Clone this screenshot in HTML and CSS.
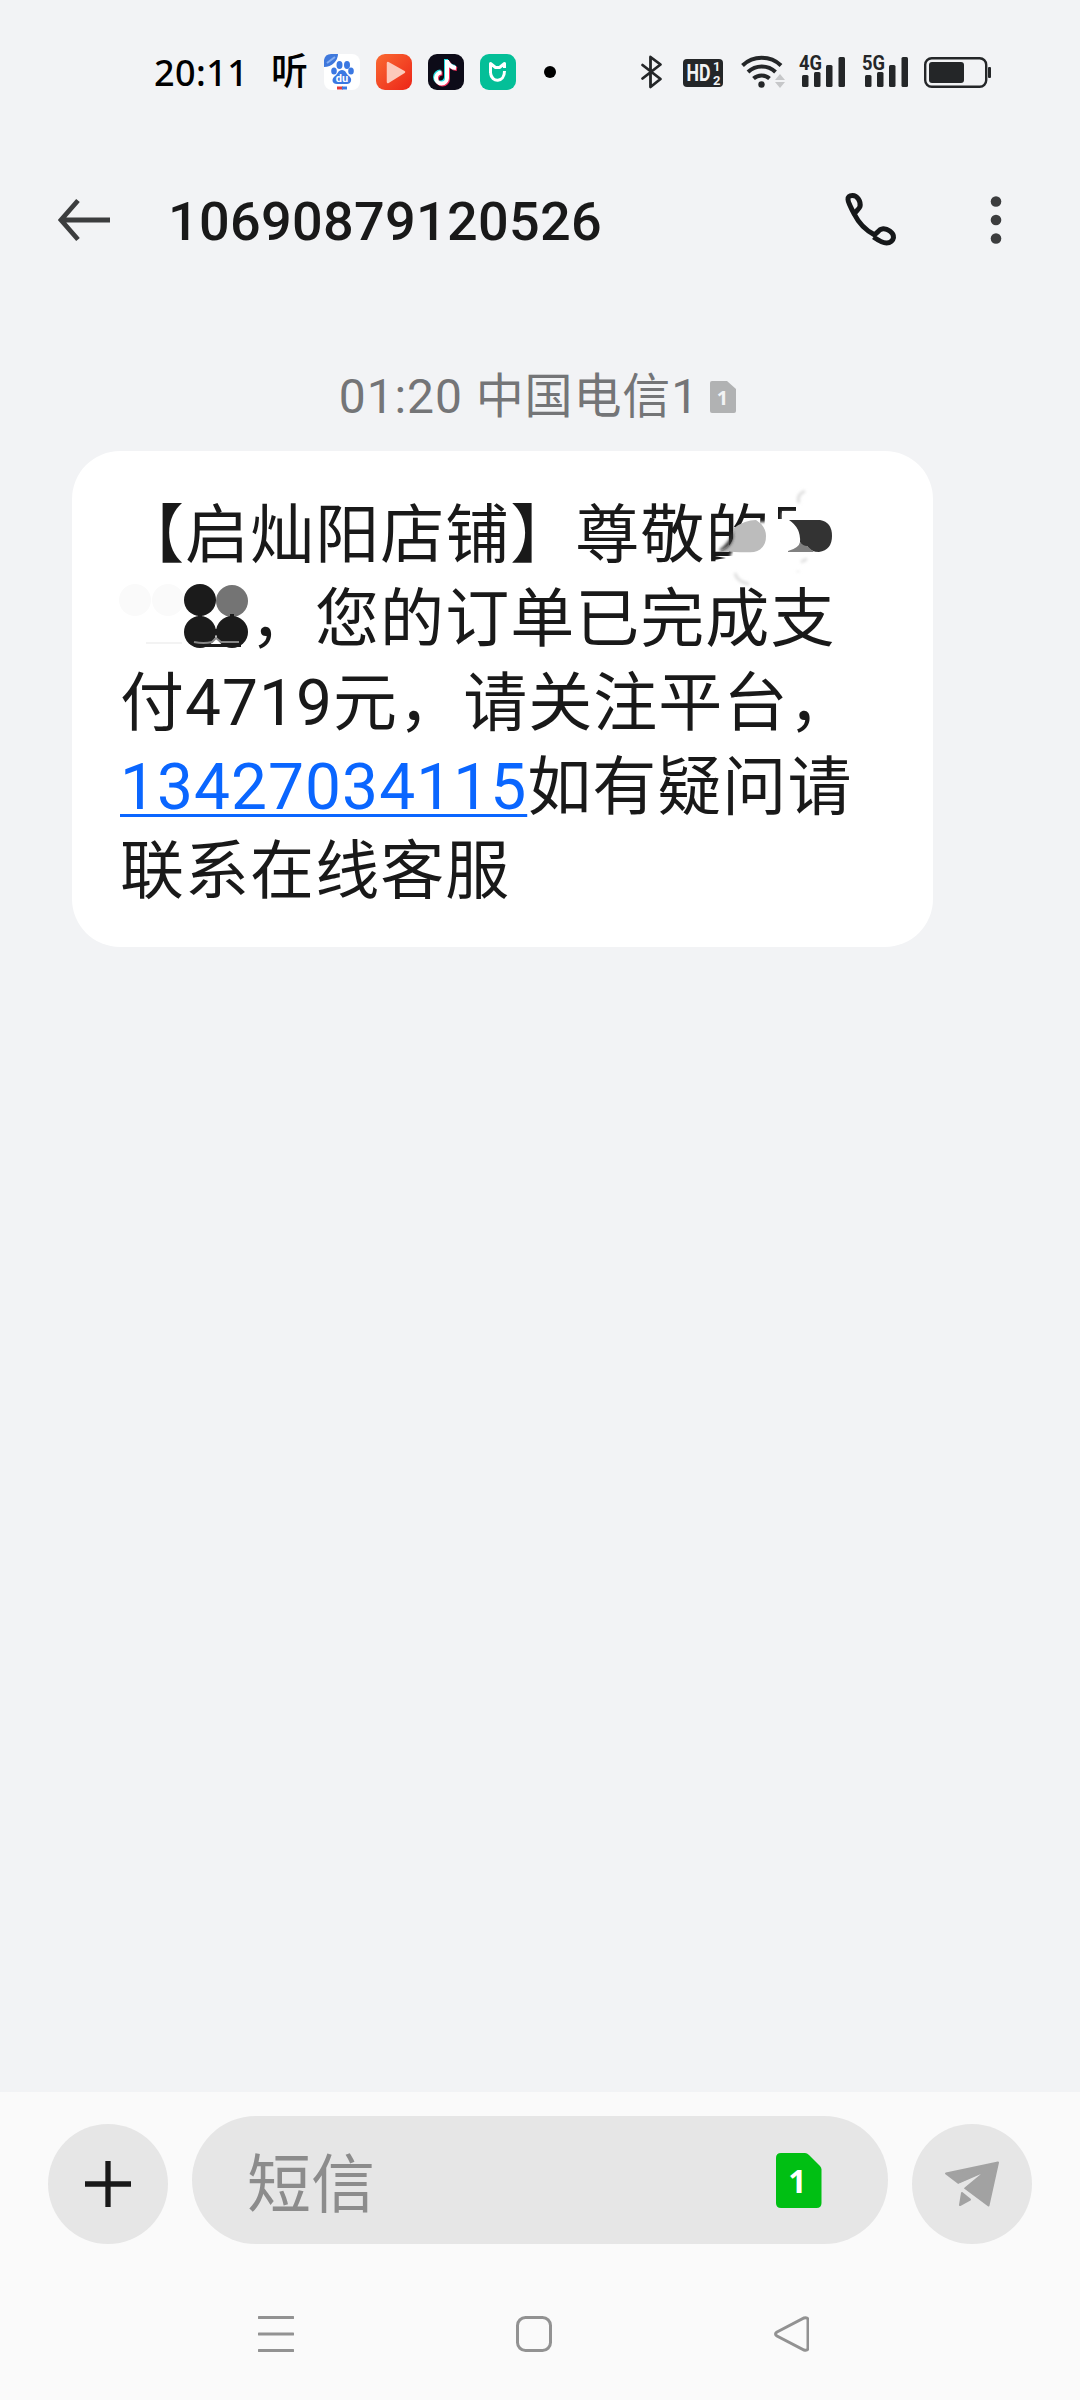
FILE: index.html
```html
<!DOCTYPE html>
<html lang="zh-CN">
<head>
	<meta charset="UTF-8">
	<title>短信</title>
	<link rel="stylesheet" href="styles.css">
</head>
<body>
	<div class="status">
		<span class="time">20:11</span>
		<span class="ting">听</span>
		<div class="apps">
			<svg width="36" height="36" viewBox="0 0 36 36">
				<rect width="36" height="36" rx="8" fill="#fff"/>
				<path d="M0 13V6Q1 0 7 0h7Q14 5 10 9T0 13z" fill="#3f78dc"/>
				<path d="M3 9l8-6" stroke="#86adf0" stroke-width="2"/>
				<g fill="#3b78e2">
					<ellipse cx="15.500" cy="11" rx="3" ry="4"/>
					<ellipse cx="23" cy="11" rx="3" ry="4"/>
					<ellipse cx="10" cy="17" rx="2.800" ry="3.600"/>
					<ellipse cx="27" cy="17" rx="2.800" ry="3.600"/>
					<path d="M18 16c4 0 4 4 7 6 4 3 2 8-2 8H13c-5 0-6-5-2-8 3-2 3-6 7-6z"/>
				</g>
				<text x="18" y="28" class="du">du</text>
				<path d="M13 34h6" stroke="#e53838" stroke-width="3"/>
				<path d="M18 34h5" stroke="#3b78e2" stroke-width="3"/>
			</svg>
			<svg width="36" height="36" viewBox="0 0 36 36">
				<defs>
					<linearGradient id="red" x1="0" y1="0" x2="1" y2="1">
						<stop offset="0" stop-color="#fa6a32"/>
						<stop offset="1" stop-color="#ec2418"/>
					</linearGradient>
				</defs>
				<rect width="36" height="36" rx="9" fill="url(#red)"/>
				<path d="M12 9l16 9-16 10z" fill="#fcc9bb" stroke="#fcc9bb" stroke-width="2.500" stroke-linejoin="round"/>
			</svg>
			<svg width="36" height="36" viewBox="0 0 36 36">
				<rect width="36" height="36" rx="9" fill="#0d0b18"/>
				<g fill="none" stroke-width="4">
					<path d="M18 5v18a5.500 5.500 0 1 1-5.500-5.500M18 6q2 6 9 7" stroke="#25dfe3"/>
					<path d="M20 7v18a5.500 5.500 0 1 1-5.500-5.500M20 8q2 6 9 7" stroke="#f4305c"/>
					<path d="M19 6v18a5.500 5.500 0 1 1-5.500-5.500M19 7q2 6 9 7" stroke="#fff"/>
				</g>
			</svg>
			<svg width="36" height="36" viewBox="0 0 36 36">
				<rect width="36" height="36" rx="9" fill="#04bf98"/>
				<path d="M10.500 19V9.500l5 4h4l5-4V14M10.500 19c1 10 14 10 14-2" fill="none" stroke="#fff" stroke-width="3" stroke-linejoin="round"/>
			</svg>
		</div>
		<i class="more-dot"></i>

		<div class="signals">
			<svg width="364" height="40" viewBox="636 52 364 40">
				<g fill="none" stroke="#242628" stroke-width="2.800" stroke-linejoin="round" stroke-linecap="round">
					<path d="M642.500 65l18 14-10 8V57l10 7.500-18 14"/>
				</g>
				<rect x="683" y="59" width="40" height="28" rx="4" fill="#242628"/>
				<text x="686.500" y="81" class="hd" textLength="24" lengthAdjust="spacingAndGlyphs">HD</text>
				<text x="713" y="71" class="hd-small">1</text>
				<text x="713" y="84.500" class="hd-small">2</text>
				<g fill="none" stroke="#242628" stroke-width="4">
					<path d="M742.500 65.500a28 28 0 0 1 38.500 0"/>
					<path d="M748 72a20 20 0 0 1 27.500 0"/>
					<path d="M753.500 78.500a12 12 0 0 1 16 0"/>
				</g>
				<circle cx="761.500" cy="84.500" r="3.200" fill="#242628"/>
				<path d="M780 74l5 6h-10zM780 88l5-6h-10z" fill="#c6c7c9"/>
				<text x="799" y="70" class="net" textLength="23" lengthAdjust="spacingAndGlyphs">4G</text>
				<text x="862" y="70" class="net" textLength="23" lengthAdjust="spacingAndGlyphs">5G</text>
				<g fill="#242628">
					<rect x="802" y="75" width="6.500" height="12" rx="1.500"/>
					<rect x="814" y="72" width="6.500" height="15" rx="1.500"/>
					<rect x="826" y="65" width="6.500" height="22" rx="1.500"/>
					<rect x="838.500" y="57" width="6.500" height="30" rx="1.500"/>
					<rect x="865" y="75" width="6.500" height="12" rx="1.500"/>
					<rect x="877" y="72" width="6.500" height="15" rx="1.500"/>
					<rect x="889" y="65" width="6.500" height="22" rx="1.500"/>
					<rect x="901.500" y="57" width="6.500" height="30" rx="1.500"/>
					<rect x="929" y="62" width="35" height="21" rx="3"/>
					<rect x="988" y="67" width="3" height="11" rx="1"/>
				</g>
				<rect x="925.200" y="58.200" width="61" height="28.600" rx="6.500" fill="none" stroke="#242628" stroke-width="2.400"/>
			</svg>
		</div>
	</div>

	<div class="header">
		<svg width="54" height="44" viewBox="0 0 54 44">
			<path d="M53 22H4M21 2.500L4 22l17 19.500" fill="none" stroke="#3c3d3e" stroke-width="4.800"/>
		</svg>
		<h1 class="number">10690879120526</h1>
		<svg class="phone" width="54" height="54" viewBox="0 0 54 54">
			<path d="M10.500 21.500C7 15 4 9 4 6.500 4 2.500 6.500 2.500 8.500 2.500c5 0 8.500 6 7.500 11-1 3-5 5-5.500 8 4 8 11 15.500 19.500 20 3-.5 4.500-5 8-5.500 5-1 12 3.500 11.500 8.500-.5 3-3 5.500-7 5.500-3.500 0-8-2.500-13-6" fill="none" stroke="#16181a" stroke-width="5" stroke-linejoin="round"/>
		</svg>
		<svg width="12" height="50" viewBox="0 0 12 50" fill="#3c3d3e">
			<circle cx="6" cy="6.500" r="5.300"/>
			<circle cx="6" cy="25" r="5.300"/>
			<circle cx="6" cy="43.500" r="5.300"/>
		</svg>
	</div>

	<div class="chat">
		<div class="date">
			<span>01:20 中国电信1</span>
			<svg width="26" height="32" viewBox="0 0 26 32">
				<path d="M2 0h15l9 8v22q0 2-2 2H2q-2 0-2-2V2q0-2 2-2z" fill="#b1b2b3"/>
				<text x="12.500" y="23.500" class="sim-small">1</text>
			</svg>
		</div>
		<div class="bubble">
			【启灿阳店铺】尊敬的<br>
			<span class="gap"></span>，您的订单已完成支<br>
			付4719元，请关注平台，<br>
			<a class="link">13427034115</a>如有疑问请<br>
			联系在线客服
			<!-- brush strokes over the customer's name -->
			<svg class="smudge" width="861" height="220" viewBox="72 451 861 220">
				<defs>
					<filter id="soft" x="-20%" y="-20%" width="140%" height="140%"><feGaussianBlur stdDeviation="1.500"/></filter>
				</defs>
				<path d="M728 566l2-10 12-26 16-8h12v48h-42z" fill="#fff" filter="url(#soft)"/>
				<path d="M714 556l12 2-12 2z" fill="#191919"/>
				<path d="M720 551q15-5 14-23 11-8 22-8 10 6 10 16 0 13-12 16-10 1-34-1z" fill="#bcbcbc"/>
				<path d="M721 551q14-5 12-20-3 11-14 19z" fill="#333" filter="url(#soft)"/>
				<path d="M780 519v-10h16" fill="none" stroke="#191919" stroke-width="4"/>
				<path d="M782 524v-12h18v8z" fill="#fff" filter="url(#soft)"/>
				<path d="M789 520h31q12 2 12 16 0 14-13 16-8 0-12-6-5 2-7-4 1-14-11-22z" fill="#333"/>
				<path d="M788 551q11-3 12-9 3 4 7 4l7 6h-26z" fill="#808080"/>
				<g fill="none" stroke="#dedede" stroke-width="3" filter="url(#soft)">
					<path d="M799 503q-3-8 6-12M735 573q2 9 14 11M801 562l6-3M798 571v1"/>
				</g>
				<circle cx="135" cy="600" r="16" fill="#fafafa"/>
				<circle cx="168" cy="600" r="16" fill="#fafafa"/>
				<path d="M146 643h36" stroke="#f3f3f3" stroke-width="2"/>
				<circle cx="232" cy="601" r="16" fill="#747474"/>
				<g fill="#1b1b1b">
					<circle cx="200" cy="600" r="16"/>
					<circle cx="200" cy="632" r="16"/>
					<circle cx="232" cy="632" r="16"/>
					<path d="M198 614h4v5h-4zM230 614h4v5h-4zM212 629h8v6h-8zM194 644h47v3h-47z"/>
				</g>
				<path d="M194 642q10 2 18 0l4-4 5 4h18" fill="none" stroke="#888" stroke-width="2"/>
			</svg>
		</div>
	</div>

	<div class="footer">
		<div class="compose">
			<button class="round">
				<svg width="46" height="46" viewBox="0 0 46 46">
					<path d="M23 0v46M0 23h46" stroke="#191919" stroke-width="5.300"/>
				</svg>
			</button>
			<div class="field">
				<span>短信</span>
				<svg width="46" height="56" viewBox="0 0 46 56">
					<path d="M5 0h24q2 0 4 2l11 11q1.500 1.500 1.500 3.500V50q0 5-5 5H5q-5 0-5-5V5q0-5 5-5z" fill="#00bf13"/>
					<text x="21.500" y="40" class="sim">1</text>
				</svg>
			</div>
			<button class="round">
				<svg width="56" height="46" viewBox="0 0 56 46">
					<g fill="#a2a2a2" stroke="#a2a2a2" stroke-width="2" stroke-linejoin="round">
						<path d="M2 12.500L54 1.500 44.500 44.500 21 27 37 13 14.500 22z"/>
						<path d="M18 32l8 6.500-10 5.500z"/>
					</g>
					<path d="M14 23L37 13 20 27" fill="#e6e6e6"/>
				</svg>
			</button>
		</div>
		<div class="nav">
			<svg width="36" height="36" viewBox="0 0 36 36">
				<path d="M1 1.500h34M1 18h34M1 34.500h34"/>
			</svg>
			<svg width="36" height="36" viewBox="0 0 36 36">
				<rect x="1.500" y="1.500" width="33" height="33" rx="8"/>
			</svg>
			<svg width="36" height="36" viewBox="0 0 36 36">
				<path d="M4 16L31 2q3.800-1 4 2v28q-.2 3-4 2L4 20q-3-2 0-4z"/>
			</svg>
		</div>
	</div>
</body>
</html>
```
FILE: styles.css
```css
* {
	box-sizing: border-box;
}
body {
	margin: 0;
	width: 1080px;
	height: 2400px;
	display: flex;
	flex-direction: column;
	background: #f2f3f5;
	color: #191919;
	font-family: Roboto, "Noto Sans CJK SC", sans-serif;
	overflow: hidden;
}
svg {
	display: block;
	flex: none;
}
.status {
	height: 144px;
	padding: 0 80px 0 154px;
	display: flex;
	align-items: center;
	color: #000;
}
.time {
	width: 117px;
	font-family: "Noto Sans", sans-serif;
	font-size: 36px;
	font-weight: 500;
	line-height: 40px;
	letter-spacing: 0.4px;
	padding-top: 2px;
}
.ting {
	width: 53px;
	font-size: 37px;
	font-weight: 500;
	line-height: 40px;
	padding-top: 2px;
}
.apps {
	display: flex;
	gap: 16px;
}
.more-dot {
	width: 12px;
	height: 12px;
	margin-left: 28px;
	border-radius: 50%;
	background: #000;
}
.signals {
	margin-left: auto;
}
.du {
	font-size: 11px;
	font-weight: 700;
	fill: #fff;
	text-anchor: middle;
}
.hd {
	font-size: 23px;
	font-weight: 700;
	fill: #f2f3f5;
}
.hd-small {
	font-size: 13px;
	font-weight: 700;
	fill: #f2f3f5;
}
.net {
	font-size: 21px;
	font-weight: 700;
	fill: #242628;
}

.header {
	height: 152px;
	padding: 0 78px 0 57px;
	display: flex;
	align-items: center;
}
.number {
	margin: 0 0 0 57px;
	font-size: 54px;
	font-weight: 500;
	letter-spacing: 0.3px;
	padding-top: 3px;
}
.phone {
	margin-left: auto;
	margin-right: 92px;
}

.chat {
	flex: 1;
	padding: 60px 72px 0;
}
.date {
	height: 95px;
	padding: 0 5px 14px 0;
	display: flex;
	justify-content: center;
	align-items: center;
	gap: 11px;
	font-size: 48px;
	letter-spacing: 0.9px;
	line-height: 60px;
	color: #747577;
}
.sim-small {
	font: 700 20px "Open Sans", sans-serif;
	fill: #f2f3f5;
	text-anchor: middle;
	letter-spacing: 0;
}
.bubble {
	position: relative;
	width: 861px;
	height: 496px;
	padding: 42.5px 40px 0 48px;
	border-radius: 48px;
	background: #fff;
	font-size: 64px;
	line-height: 84.2px;
	letter-spacing: 1.05px;
	white-space: nowrap;
	text-spacing-trim: space-all;
}
.gap {
	display: inline-block;
	width: 130px;
}
.link {
	color: #0a66ff;
	text-decoration: underline;
	text-decoration-thickness: 3px;
	text-underline-offset: 5px;
}
.smudge {
	position: absolute;
	left: 0;
	top: 0;
}

.footer {
	height: 308px;
	padding: 24px 48px 0;
	background: #fafafa;
}
.compose {
	display: flex;
	align-items: flex-end;
	gap: 24px;
}
.round {
	width: 120px;
	height: 120px;
	padding: 0;
	border: none;
	border-radius: 50%;
	background: #e6e6e6;
	display: flex;
	justify-content: center;
	align-items: center;
}
.field {
	flex: 1;
	height: 128px;
	padding: 2px 66px 0 55px;
	border-radius: 64px;
	background: #e6e6e6;
	display: flex;
	justify-content: space-between;
	align-items: center;
	font-size: 64px;
	line-height: 90px;
	color: #8c8c8c;
}
.field span {
	padding-top: 9px;
}
.sim {
	font: 700 32px "Open Sans", sans-serif;
	fill: #fff;
	text-anchor: middle;
}
.nav {
	padding: 72px 223px 0 210px;
	display: flex;
	justify-content: space-between;
}
.nav svg {
	fill: none;
	stroke: #929292;
	stroke-width: 3;
	stroke-linecap: round;
}
```
